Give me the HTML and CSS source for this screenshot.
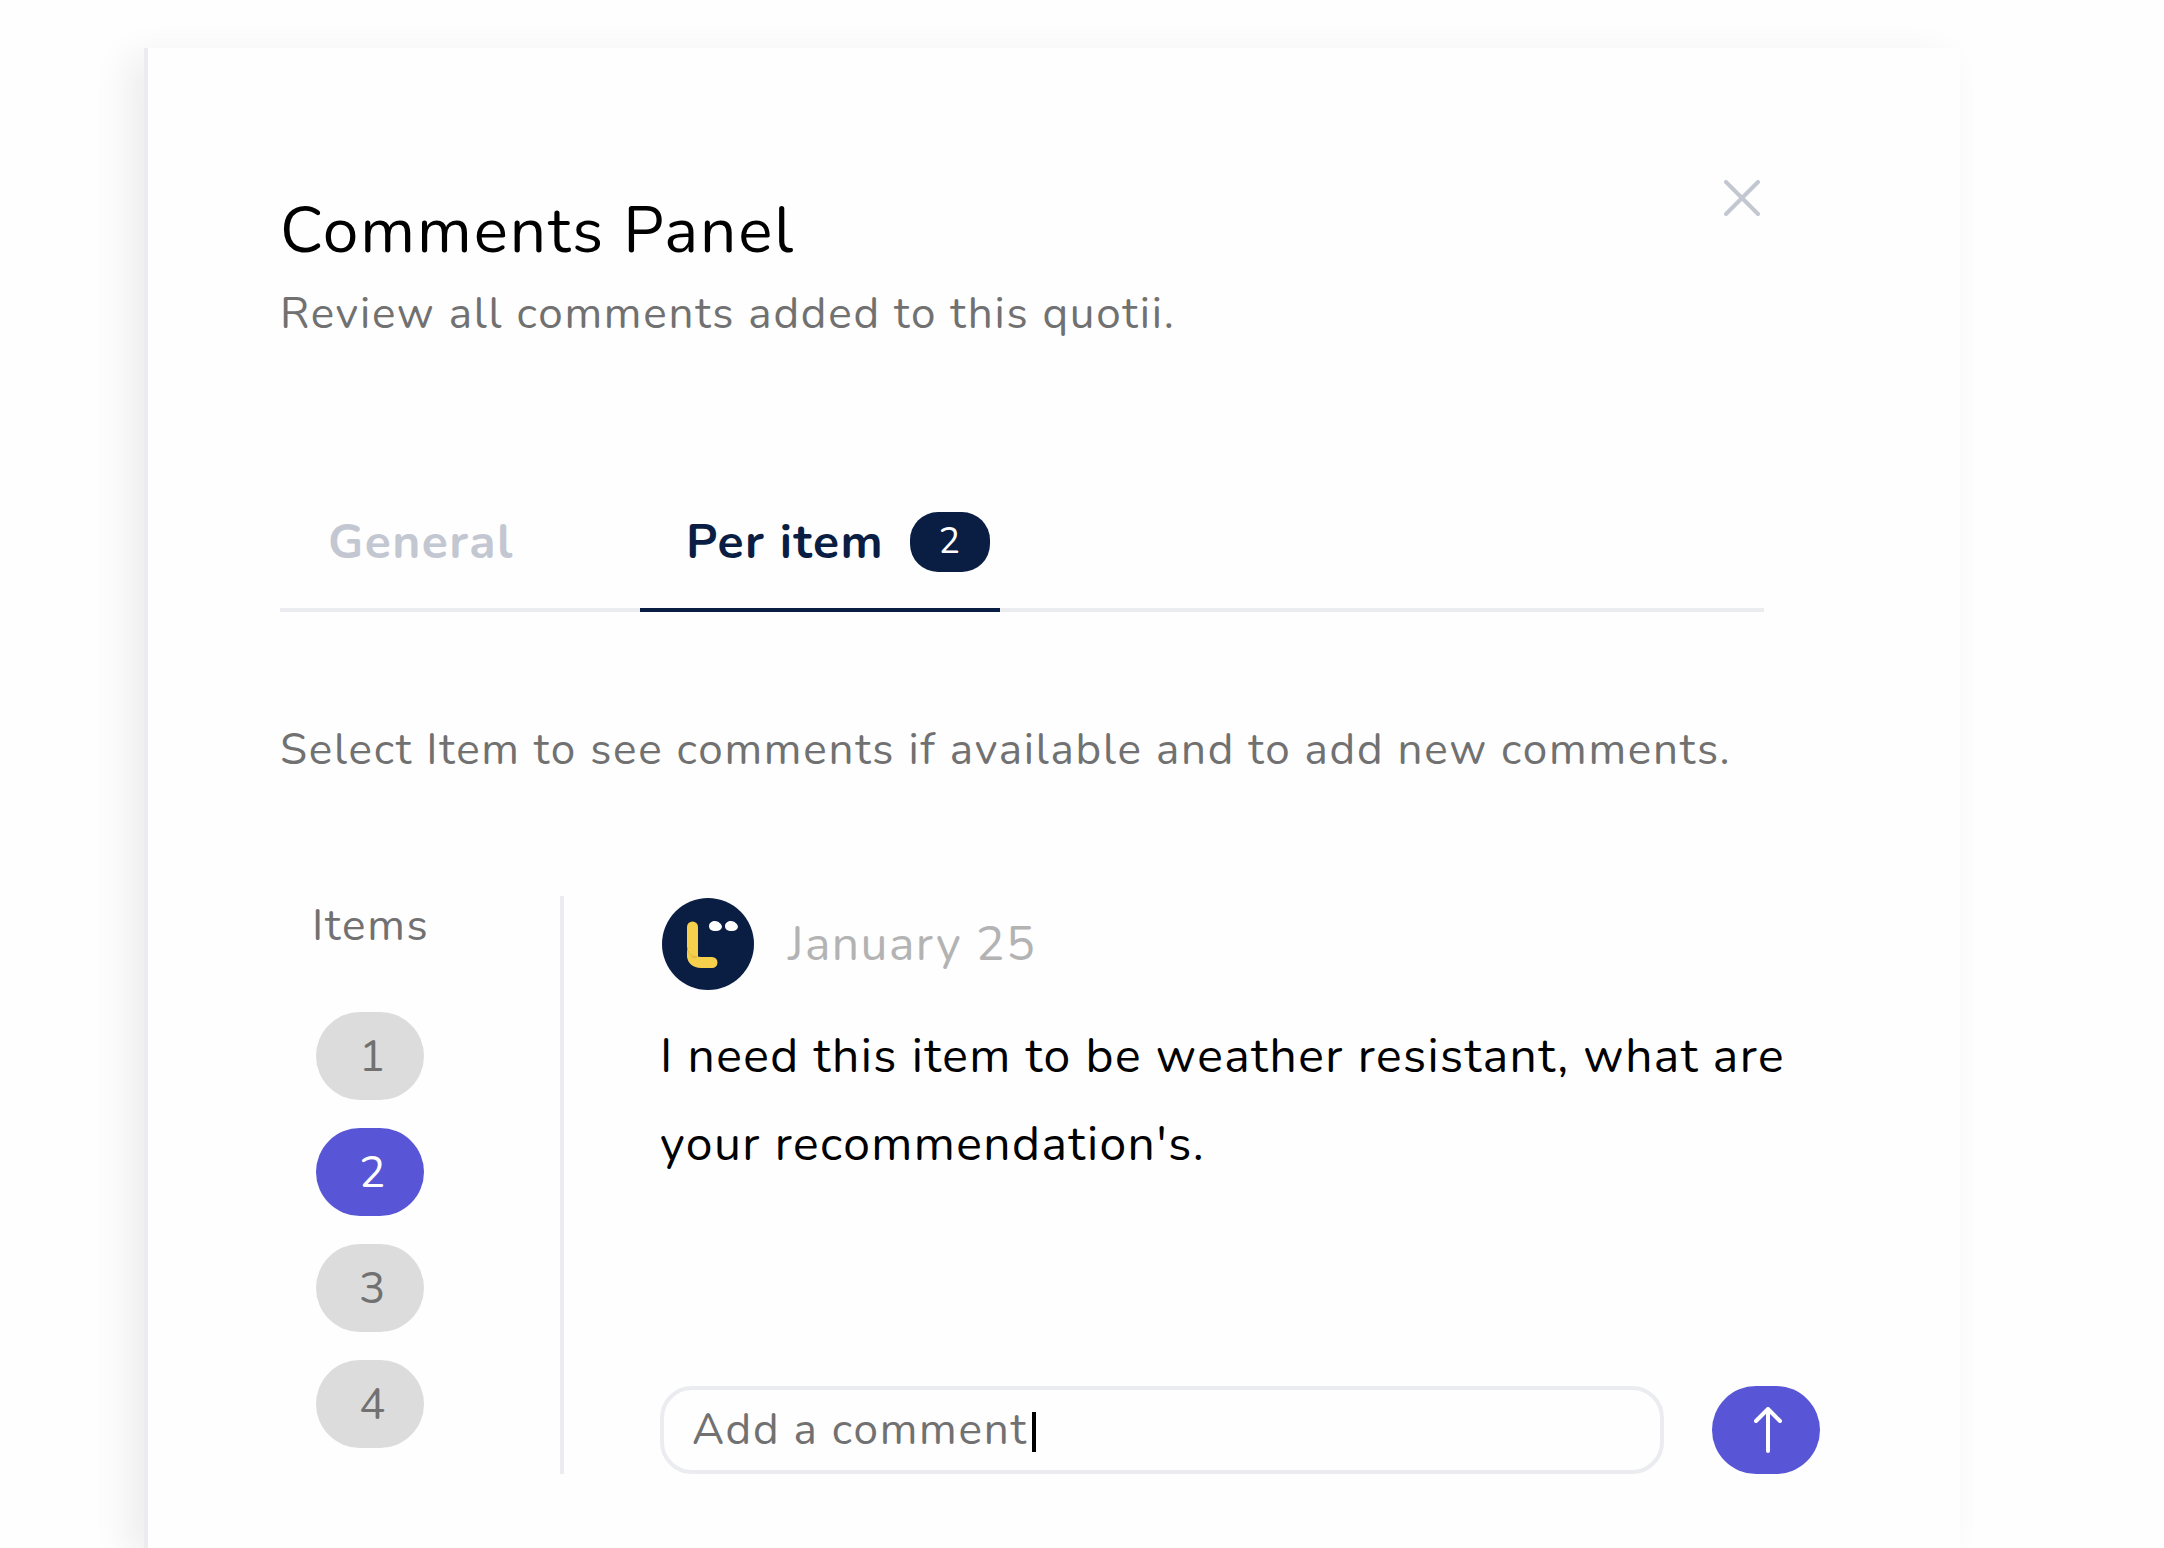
FILE: index.html
```html
<!DOCTYPE html>
<html lang="en">
<head>
<meta charset="utf-8">
<meta name="viewport" content="width=device-width, initial-scale=1">
<title>Comments Panel</title>
<link rel="stylesheet" href="styles.css">
</head>
<body>
<main class="panel">
  <header class="panel-header">
    <div class="panel-heading">
      <h1 class="title">Comments Panel</h1>
      <p class="hint">Review all comments added to this quotii.</p>
    </div>
    <button class="close" type="button" aria-label="Close">
      <svg width="36" height="36" viewBox="0 0 36 36" fill="none" stroke="currentColor" stroke-width="4" stroke-linecap="round"><path d="M2 2 34 34M34 2 2 34"/></svg>
    </button>
  </header>

  <nav class="tabs" role="tablist">
    <button class="tab" type="button" role="tab" aria-selected="false">General</button>
    <button class="tab tab-active" type="button" role="tab" aria-selected="true">Per item <span class="badge">2</span></button>
  </nav>

  <p class="hint">Select Item to see comments if available and to add new comments.</p>

  <section class="content">
    <aside class="items">
      <h2 class="items-title">Items</h2>
      <button class="item" type="button">1</button>
      <button class="item item-active" type="button">2</button>
      <button class="item" type="button">3</button>
      <button class="item" type="button">4</button>
    </aside>
    <div class="thread">
      <article class="comment">
        <div class="comment-meta">
          <svg class="avatar" viewBox="0 0 92 92" aria-hidden="true">
            <defs>
              <linearGradient id="fold" x1="1" y1="0" x2="0" y2="1">
                <stop offset="0" stop-color="#b38f2c"/>
                <stop offset="0.7" stop-color="#f6cf4c"/>
              </linearGradient>
            </defs>
            <circle cx="46" cy="46" r="46" fill="#0a1e44"/>
            <path d="M25 54 25 57C25 65 31 70 39 70H50A5 5 0 0 0 50 59H39C36 59 34 58 32 56Z" fill="#f6cf4c"/>
            <path d="M25 29A5.500 5.500 0 0 1 36 29V59Q25 57 25 49Z" fill="#f6cf4c"/>
            <path d="M25 50Q26 57 36 59Q31 60 28 64Q25 61 25 56Z" fill="url(#fold)"/>
            <path d="M47 28C47 25 50 23 53 23S60 26 60 29Q59 33 54 33C49 33 47 31 47 28ZM63 28C63 25 66 23 69 23S76 26 76 29Q75 33 70 33C65 33 63 31 63 28Z" fill="#fff"/>
          </svg>
          <time class="date">January 25</time>
        </div>
        <p class="comment-text">I need this item to be weather resistant, what are your recommendation's.</p>
      </article>
      <form class="composer">
        <label class="field">
          <input class="field-input" type="text" placeholder="Add a comment" aria-label="Add a comment">
          <span class="caret"></span>
        </label>
        <button class="send" type="button" aria-label="Send">
          <svg width="28" height="46" viewBox="0 0 28 46" fill="none" stroke="currentColor" stroke-width="4" stroke-linecap="round" stroke-linejoin="round"><path d="M14 44V2M2 14 14 2 26 14"/></svg>
        </button>
      </form>
    </div>
  </section>
</main>
</body>
</html>
```
FILE: styles.css
```css
* { box-sizing: border-box; }

body {
  margin: 0;
  background: #fefefe;
  color: #000;
  font-family: Nunito, "Noto Sans", sans-serif;
  font-size: 44px;
  line-height: 60px;
  letter-spacing: 0.04em;
}

h1, h2, p { margin: 0; font-weight: 400; }

button, input {
  margin: 0;
  padding: 0;
  border: 0;
  background: none;
  color: inherit;
  font: inherit;
  letter-spacing: inherit;
}

svg { display: block; }

.panel {
  min-height: calc(100vh - 48px);
  margin: 48px 204px 0 144px;
  padding: 132px 140px 74px 132px;
  border-left: 4px solid #ebecf0;
  background: #fefefe;
  box-shadow: -16px 8px 36px rgba(0, 0, 0, 0.07);
}

.panel-header {
  display: flex;
  justify-content: space-between;
  align-items: flex-start;
  margin-right: 60px;
}

.panel-heading { padding-top: 4px; }

.title {
  margin-bottom: 6px;
  font-size: 64px;
  line-height: 94px;
  letter-spacing: 0.03em;
}

.hint { color: #717171; }

.close { color: #c3c7d1; }

.tabs {
  display: flex;
  margin: 156px 56px 108px 0;
  box-shadow: inset 0 -4px #ebecf0;
}

.tab {
  display: flex;
  align-items: center;
  gap: 26px;
  width: 360px;
  height: 112px;
  padding: 0 0 24px 48px;
  border-bottom: 4px solid transparent;
  color: #c3c7d1;
  font-size: 48px;
  font-weight: 700;
  letter-spacing: 0.03em;
  white-space: nowrap;
}

.tab-active {
  padding-left: 46px;
  border-color: #0a1e44;
  color: #0a1e44;
}

.badge {
  width: 80px;
  border-radius: 28px;
  background: #0a1e44;
  color: #fff;
  font-size: 36px;
  font-weight: 400;
  text-align: center;
}

.content {
  display: flex;
  margin-top: 116px;
}

.items {
  display: flex;
  flex-direction: column;
  gap: 28px;
  width: 284px;
  padding: 0 100px 26px 32px;
  border-right: 4px solid #ebecf0;
}

.items-title {
  margin-bottom: 28px;
  font-size: 44px;
  color: #717171;
}

.item {
  width: 108px;
  height: 88px;
  margin-left: 4px;
  padding: 2px 0 0 6px;
  border-radius: 44px;
  background: #dcdcdc;
  color: #717171;
}

.item-active {
  background: #5856d6;
  color: #fff;
}

.thread {
  display: flex;
  flex: 1;
  flex-direction: column;
  justify-content: space-between;
  padding: 2px 0 0 96px;
}

.comment-meta {
  display: flex;
  align-items: center;
  gap: 34px;
  margin-bottom: 22px;
  padding-left: 2px;
}

.avatar {
  width: 92px;
  height: 92px;
}

.date {
  color: #b3b3b3;
  font-size: 48px;
  letter-spacing: 0.03em;
}

.comment-text {
  font-size: 48px;
  line-height: 88px;
  letter-spacing: 0.03em;
}

.composer {
  display: flex;
  gap: 48px;
}

.field {
  display: flex;
  flex: 1;
  align-items: center;
  height: 88px;
  padding: 0 28px;
  border: 4px solid #ebecf0;
  border-radius: 32px;
}

.field-input {
  field-sizing: content;
  min-width: 0;
  outline: 0;
}

.field-input::placeholder {
  color: #717171;
  opacity: 1;
}

.caret {
  width: 4px;
  height: 40px;
  margin: 4px 0 0 4px;
  background: #000;
}

.send {
  display: grid;
  place-items: center;
  width: 108px;
  height: 88px;
  padding-left: 4px;
  border-radius: 44px;
  background: #5856d6;
  color: #fff;
}
```
